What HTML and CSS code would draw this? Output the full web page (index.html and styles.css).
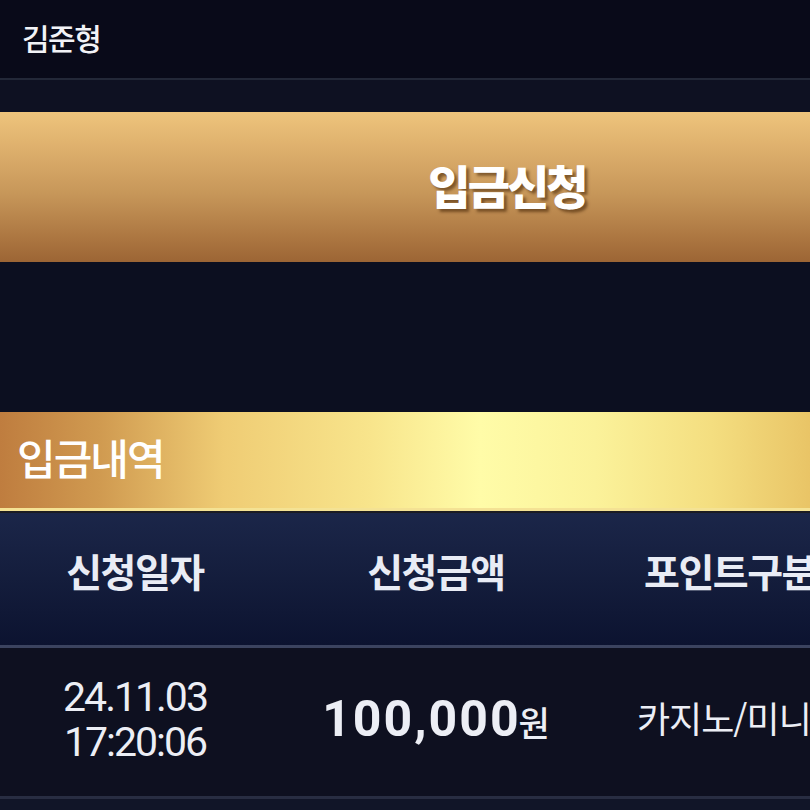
FILE: index.html
```html
<!DOCTYPE html>
<html lang="ko">
<head>
<meta charset="utf-8">
<title>입금신청</title>
<link rel="stylesheet" href="styles.css">
</head>
<body>
<div class="page">
  <header class="topbar"><span class="user">김준형</span></header>
  <div class="subbar"></div>
  <div class="btn-wrap"><button class="apply-btn">입금신청</button></div>
  <div class="gap"></div>
  <div class="section-title"><span>입금내역</span></div>
  <div class="table">
    <div class="thead">
      <div class="c c1">신청일자</div>
      <div class="c c2">신청금액</div>
      <div class="c c3">포인트구분</div>
    </div>
    <div class="trow">
      <div class="c c1 date"><span>24.11.03</span><span>17:20:06</span></div>
      <div class="c c2 amount"><span class="num">100,000</span><span class="won">원</span></div>
      <div class="c c3 kind">카지노/미니게임</div>
    </div>
  </div>
  <div class="rest"></div>
</div>
</body>
</html>
```
FILE: styles.css
```css
html, body {
  margin: 0;
  padding: 0;
  background: #0c0f20;
  overflow: hidden;
}
body {
  width: 810px;
  height: 810px;
  font-family: "Noto Sans CJK KR", "Noto Sans", sans-serif;
  color: #eef0f6;
}
.page {
  width: 1014px;
}
.topbar {
  height: 78px;
  background: #090a19;
  border-bottom: 2px solid #232838;
  display: flex;
  align-items: center;
  padding-left: 22px;
  box-sizing: content-box;
}
.user {
  font-size: 30px;
  font-weight: 500;
  letter-spacing: -1.5px;
  color: #f2f3f7;
  margin-top: -4px;
}
.subbar {
  height: 32px;
  background: #0e1122;
}
.btn-wrap {
  display: flex;
}
.apply-btn {
  width: 100%;
  height: 150px;
  border: 0;
  margin: 0;
  padding: 0 0 6px 0;
  background: linear-gradient(180deg, #eec47c 0%, #ddaf6c 25%, #c69659 55%, #ab7540 85%, #9c6535 100%);
  color: #ffffff;
  font-family: "Noto Sans CJK KR", sans-serif;
  font-size: 46px;
  font-weight: 900;
  letter-spacing: -3px;
  text-shadow: 3px 3px 3px rgba(60, 30, 0, 0.55);
}
.gap {
  height: 150px;
  background: #0c0f20;
}
.section-title {
  height: 96px;
  width: 810px;
  background: linear-gradient(90deg, #bf7d3f 0%, #d09a50 12%, #efcc74 27%, #f8e58c 45%, #fffca8 58%, #fbf29a 72%, #f4de80 86%, #e7c062 100%);
  border-bottom: 3px solid #f4e294;
  box-shadow: 0 2px 0 #1c1c22;
  display: flex;
  align-items: center;
  padding-left: 17px;
  box-sizing: content-box;
}
.section-title span {
  font-size: 42px;
  font-weight: 500;
  letter-spacing: -2px;
  color: #ffffff;
  margin-top: -8px;
}
.table {
  margin-top: 2px;
}
.thead, .trow {
  display: grid;
  grid-template-columns: 270px 332px 256px;
}
.thead {
  height: 132px;
  background: linear-gradient(180deg, #1b2649 0%, #141d3c 50%, #0c1330 100%);
  border-bottom: 3px solid #3b435f;
}
.trow {
  height: 148px;
  background: #0e1020;
  border-bottom: 3px solid #282d42;
}
.c {
  display: flex;
  align-items: center;
  justify-content: center;
}
.thead .c {
  font-size: 39px;
  font-weight: 700;
  letter-spacing: -1.5px;
  color: #e9ecf5;
  padding-bottom: 18px;
}
.date {
  flex-direction: column;
  font-family: Roboto, "DejaVu Sans", sans-serif;
  font-size: 41px;
  line-height: 45px;
  letter-spacing: -2px;
  color: #eceef5;
  padding-bottom: 4px;
}
.amount {
  color: #eceef5;
  align-items: baseline;
  padding-top: 42px;
  box-sizing: border-box;
}
.amount .num {
  font-family: Roboto, "DejaVu Sans", sans-serif;
  font-weight: 700;
  font-size: 50px;
  letter-spacing: 2px;
}
.amount .won {
  font-size: 34px;
  font-weight: 500;
  margin-left: -2px;
}
.kind {
  justify-content: flex-start;
  padding-left: 35px;
  padding-bottom: 10px;
  font-size: 36px;
  font-weight: 400;
  white-space: nowrap;
  letter-spacing: -1px;
  color: #eceef5;
}
.rest {
  height: 40px;
  background: #111528;
}
```
